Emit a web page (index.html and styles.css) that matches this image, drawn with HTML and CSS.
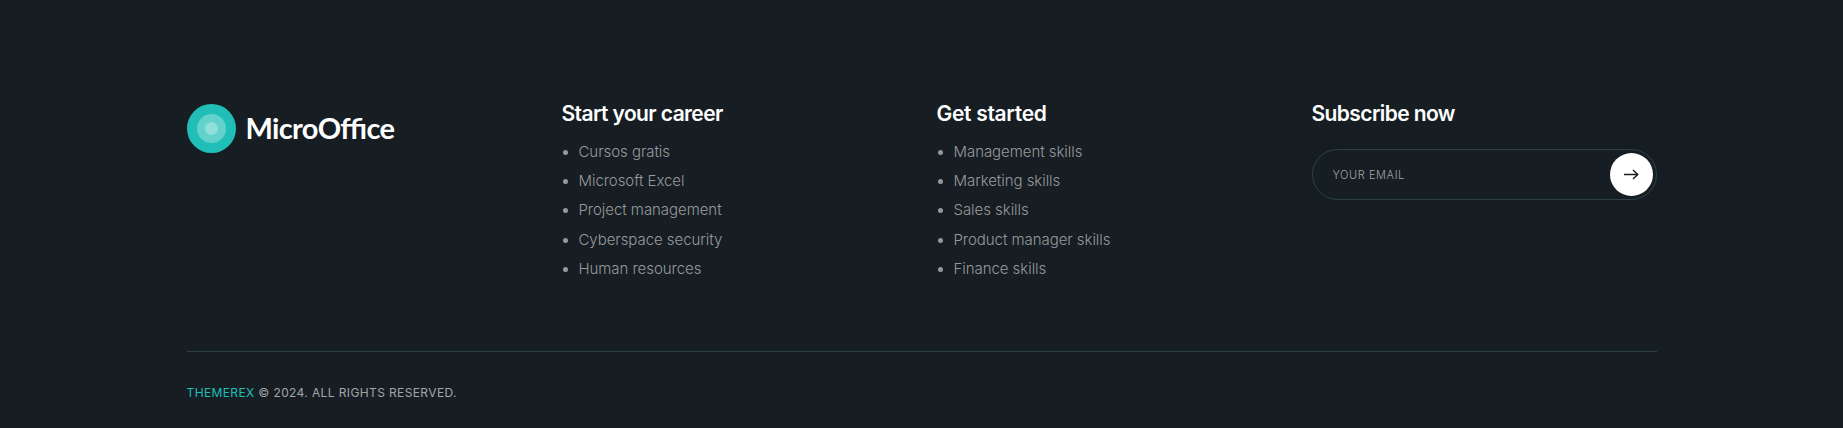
FILE: index.html
```html
<!DOCTYPE html>
<html lang="en">
<head>
  <meta charset="utf-8">
  <title>MicroOffice</title>
  <link rel="stylesheet" href="styles.css">
</head>
<body>
<footer class="footer">
  <div class="footer-columns">
    <div class="footer-logo">
      <svg width="212" height="49" viewBox="0 0 212 49" role="img" aria-label="MicroOffice">
        <circle cx="24.5" cy="24.5" r="24.5" fill="#20beb6"/>
        <circle cx="24.5" cy="24.5" r="14.5" fill="#63d2cc"/>
        <circle cx="24.5" cy="24.5" r="6.5" fill="#90dfdb"/>
        <text class="logo-text" x="58.5" y="35" textLength="149.5">MicroOffice</text>
      </svg>
    </div>
    <div class="footer-col">
      <h5>Start your career</h5>
      <ul>
        <li>Cursos gratis</li>
        <li>Microsoft Excel</li>
        <li>Project management</li>
        <li>Cyberspace security</li>
        <li>Human resources</li>
      </ul>
    </div>
    <div class="footer-col">
      <h5 class="wide">Get started</h5>
      <ul>
        <li>Management skills</li>
        <li>Marketing skills</li>
        <li>Sales skills</li>
        <li>Product manager skills</li>
        <li>Finance skills</li>
      </ul>
    </div>
    <div class="footer-col">
      <h5>Subscribe now</h5>
      <form class="subscribe" onsubmit="event.preventDefault();">
        <input type="email" placeholder="YOUR EMAIL" aria-label="Your email">
        <button type="submit" aria-label="Subscribe">
          <svg width="15" height="11" viewBox="0 0 15 11" fill="none" stroke="#161e24" stroke-width="1.4">
            <path d="M0 5.5H14M9 1l4.8 4.5L9 10"/>
          </svg>
        </button>
      </form>
    </div>
  </div>
  <div class="copyright"><a href="#">THEMEREX</a> © 2024. ALL RIGHTS RESERVED.</div>
</footer>
</body>
</html>
```
FILE: styles.css
```css
* {
  box-sizing: border-box;
}
body {
  margin: 0;
  background: #161e24;
  color: #96999b;
  font-family: Inter, sans-serif;
}
.footer {
  width: 1470px;
  margin: 0 auto;
  padding-top: 104px;
}
.footer-columns {
  display: grid;
  grid-template-columns: repeat(4, 345px);
  gap: 30px;
  height: 248px;
  border-bottom: 1px solid #2d4147;
}
.footer-logo svg {
  display: block;
}
.logo-text {
  font-family: Lato, sans-serif;
  font-size: 29px;
  font-weight: 700;
  fill: #fff;
}
h5 {
  margin: -3px 0 0;
  font-size: 21px;
  line-height: 26px;
  font-weight: 600;
  letter-spacing: -0.6px;
  color: #fff;
}
h5.wide {
  letter-spacing: -0.3px;
}
ul {
  margin: 9.5px 0 0;
  padding: 0;
  list-style: none;
}
li {
  display: flex;
  align-items: center;
  height: 29.3px;
  font-size: 15px;
  font-weight: 300;
  letter-spacing: -0.05px;
}
li::before {
  content: "";
  width: 5px;
  height: 5px;
  margin: 2px 11px 0 1px;
  border-radius: 50%;
  background: #96999b;
}
.subscribe {
  display: flex;
  align-items: center;
  height: 51px;
  margin-top: 22px;
  padding: 0 3px 0 20px;
  border: 1px solid #2d4147;
  border-radius: 26px;
  box-shadow: 0 10px 30px rgba(0, 0, 0, 0.05);
}
.subscribe input {
  flex: 1;
  min-width: 0;
  padding: 0;
  border: 0;
  outline: 0;
  background: none;
  color: #96999b;
  font: 300 11px Inter, sans-serif;
  letter-spacing: 0.6px;
}
.subscribe input::placeholder {
  color: #a2a5a7;
}
.subscribe button {
  display: flex;
  align-items: center;
  justify-content: center;
  width: 43px;
  height: 43px;
  padding: 0;
  border: 0;
  border-radius: 50%;
  background: #fff;
  cursor: pointer;
}
.copyright {
  margin-top: 33px;
  font-size: 12px;
  line-height: 16px;
  letter-spacing: 0.38px;
  color: #a2a5a7;
}
.copyright a {
  color: #20beb6;
  text-decoration: none;
}
```
